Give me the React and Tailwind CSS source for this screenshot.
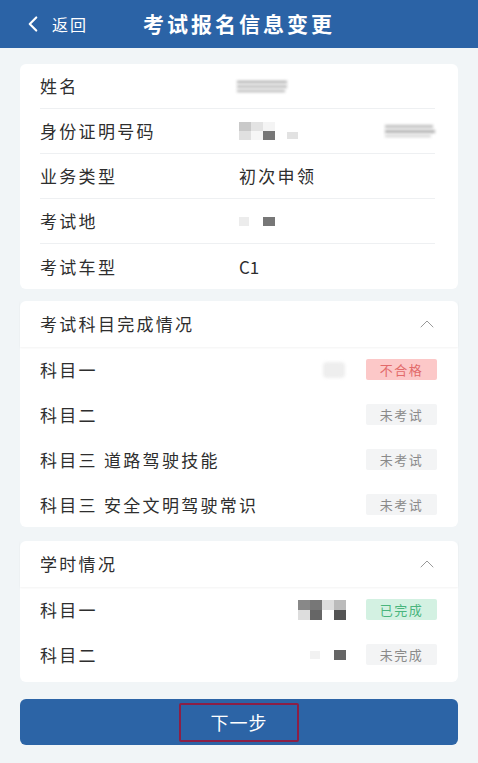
import { ChevronLeft, ChevronUp } from 'lucide-react'

const font = { fontFamily: '"Noto Sans CJK SC", "Noto Sans", sans-serif' }

function Blur({ className }) {
  return <div className={'blur-[1.5px] ' + className}></div>
}

function InfoRow({ label, children, last }) {
  return (
    <div className={'flex items-center h-[45px] ' + (last ? '' : 'border-b border-[#eef0f2]')}>
      <div className="w-[199px] text-[17px] tracking-[2.3px] text-[#2e2e2e]">{label}</div>
      <div className="flex-1 flex items-center text-[17px] tracking-[2.3px] text-[#2e2e2e]">{children}</div>
    </div>
  )
}

function Badge({ text, tone }) {
  const tones = {
    red: 'bg-[#fcc8c8] text-[#e26a6a]',
    gray: 'bg-[#f3f4f5] text-[#8a8a8a]',
    green: 'bg-[#d3f1e2] text-[#49b57d]',
  }
  return (
    <div className={'w-[71px] h-[21px] rounded-[2px] flex items-center justify-center text-[13px] tracking-[1.5px] ' + tones[tone]}>
      {text}
    </div>
  )
}

function SubjectRow({ label, badge, tone, mask }) {
  return (
    <div className="flex items-center h-[45px] px-[20px] pr-[21px]">
      <div className="flex-1 text-[17px] tracking-[2.3px] text-[#2e2e2e] whitespace-pre">{label}</div>
      {mask}
      <Badge text={badge} tone={tone} />
    </div>
  )
}

function SectionHead({ title }) {
  return (
    <div className="flex items-center h-[46px] pl-[20px] pr-[19px] shadow-[0_1px_2px_rgba(0,0,0,0.05)]">
      <div className="flex-1 text-[17px] tracking-[2.3px] text-[#2e2e2e]">{title}</div>
      <ChevronUp size={24} strokeWidth={1} className="text-[#999]" />
    </div>
  )
}

export default function App() {
  return (
    <div className="w-[478px] h-[763px] bg-[#f1f5f7] flex flex-col overflow-hidden" style={font}>
      <div className="h-[48px] bg-[#2b63a6] flex items-center text-white shrink-0">
        <div className="flex items-center pl-[20px] w-[143px]">
          <ChevronLeft size={26} strokeWidth={2} />
          <span className="ml-[6px] text-[16px] tracking-[2px]">返回</span>
        </div>
        <div className="text-[21px] font-bold tracking-[3px]">考试报名信息变更</div>
      </div>

      <div className="flex flex-col px-[20px] pt-[16px]">
        <div className="bg-white rounded-[6px] pl-[20px] pr-[23px]">
          <InfoRow label="姓名">
            <div className="flex flex-col gap-[2px] ml-[-2px]">
              <Blur className="w-[50px] h-[2px] bg-[#999]" />
              <Blur className="w-[50px] h-[3px] bg-[#bbb]" />
              <Blur className="w-[48px] h-[2px] bg-[#aaa]" />
            </div>
          </InfoRow>
          <InfoRow label="身份证明号码">
            <div className="flex flex-1 items-center">
              <div className="grid grid-cols-3 w-[36px] h-[18px]">
                <div className="bg-[#c9c9c9]"></div>
                <div className="bg-[#e3e3e3]"></div>
                <div className="bg-[#f4f4f4]"></div>
                <div className="bg-[#e0e0e0]"></div>
                <div className="bg-[#f6f6f6]"></div>
                <div className="bg-[#777]"></div>
              </div>
              <div className="w-[11px] h-[7px] bg-[#e2e2e2] ml-[12px] mt-[8px]"></div>
              <div className="flex-1"></div>
              <div className="flex flex-col gap-[2px]">
                <Blur className="w-[48px] h-[3px] bg-[#bbb]" />
                <Blur className="w-[50px] h-[3px] bg-[#aaa]" />
                <Blur className="w-[46px] h-[2px] bg-[#ccc]" />
              </div>
            </div>
          </InfoRow>
          <InfoRow label="业务类型">初次申领</InfoRow>
          <InfoRow label="考试地">
            <div className="w-[10px] h-[9px] bg-[#ececec]"></div>
            <div className="w-[12px] h-[9px] bg-[#777] ml-[14px]"></div>
          </InfoRow>
          <InfoRow label="考试车型" last>
            <span className="tracking-normal">C1</span>
          </InfoRow>
        </div>

        <div className="bg-white rounded-[6px] mt-[12px]">
          <SectionHead title="考试科目完成情况" />
          <SubjectRow
            label="科目一"
            badge="不合格"
            tone="red"
            mask={<Blur className="w-[22px] h-[16px] bg-[#eee] rounded-[4px] mr-[21px]" />}
          />
          <SubjectRow label="科目二" badge="未考试" tone="gray" />
          <SubjectRow label="科目三 道路驾驶技能" badge="未考试" tone="gray" />
          <SubjectRow label="科目三 安全文明驾驶常识" badge="未考试" tone="gray" />
        </div>

        <div className="bg-white rounded-[6px] mt-[14px] pb-[5px]">
          <SectionHead title="学时情况" />
          <SubjectRow
            label="科目一"
            badge="已完成"
            tone="green"
            mask={
              <div className="grid grid-cols-4 w-[48px] h-[20px] mr-[20px]">
                <div className="bg-[#888]"></div>
                <div className="bg-[#777]"></div>
                <div className="bg-[#ddd]"></div>
                <div className="bg-[#bbb]"></div>
                <div className="bg-[#ddd]"></div>
                <div className="bg-[#666]"></div>
                <div className="bg-[#fff]"></div>
                <div className="bg-[#555]"></div>
              </div>
            }
          />
          <SubjectRow
            label="科目二"
            badge="未完成"
            tone="gray"
            mask={
              <div className="flex items-center mr-[20px]">
                <div className="w-[10px] h-[8px] bg-[#f2f2f2]"></div>
                <div className="w-[12px] h-[10px] bg-[#666] ml-[14px]"></div>
              </div>
            }
          />
        </div>

        <div className="mt-[17px] h-[46px] bg-[#2c64a6] rounded-[6px] flex items-center justify-center">
          <div className="w-[120px] h-[39px] border-2 border-[#8c1f45] rounded-[2px] flex items-center justify-center text-white text-[18px] tracking-[1px]">
            下一步
          </div>
        </div>
      </div>
    </div>
  )
}
